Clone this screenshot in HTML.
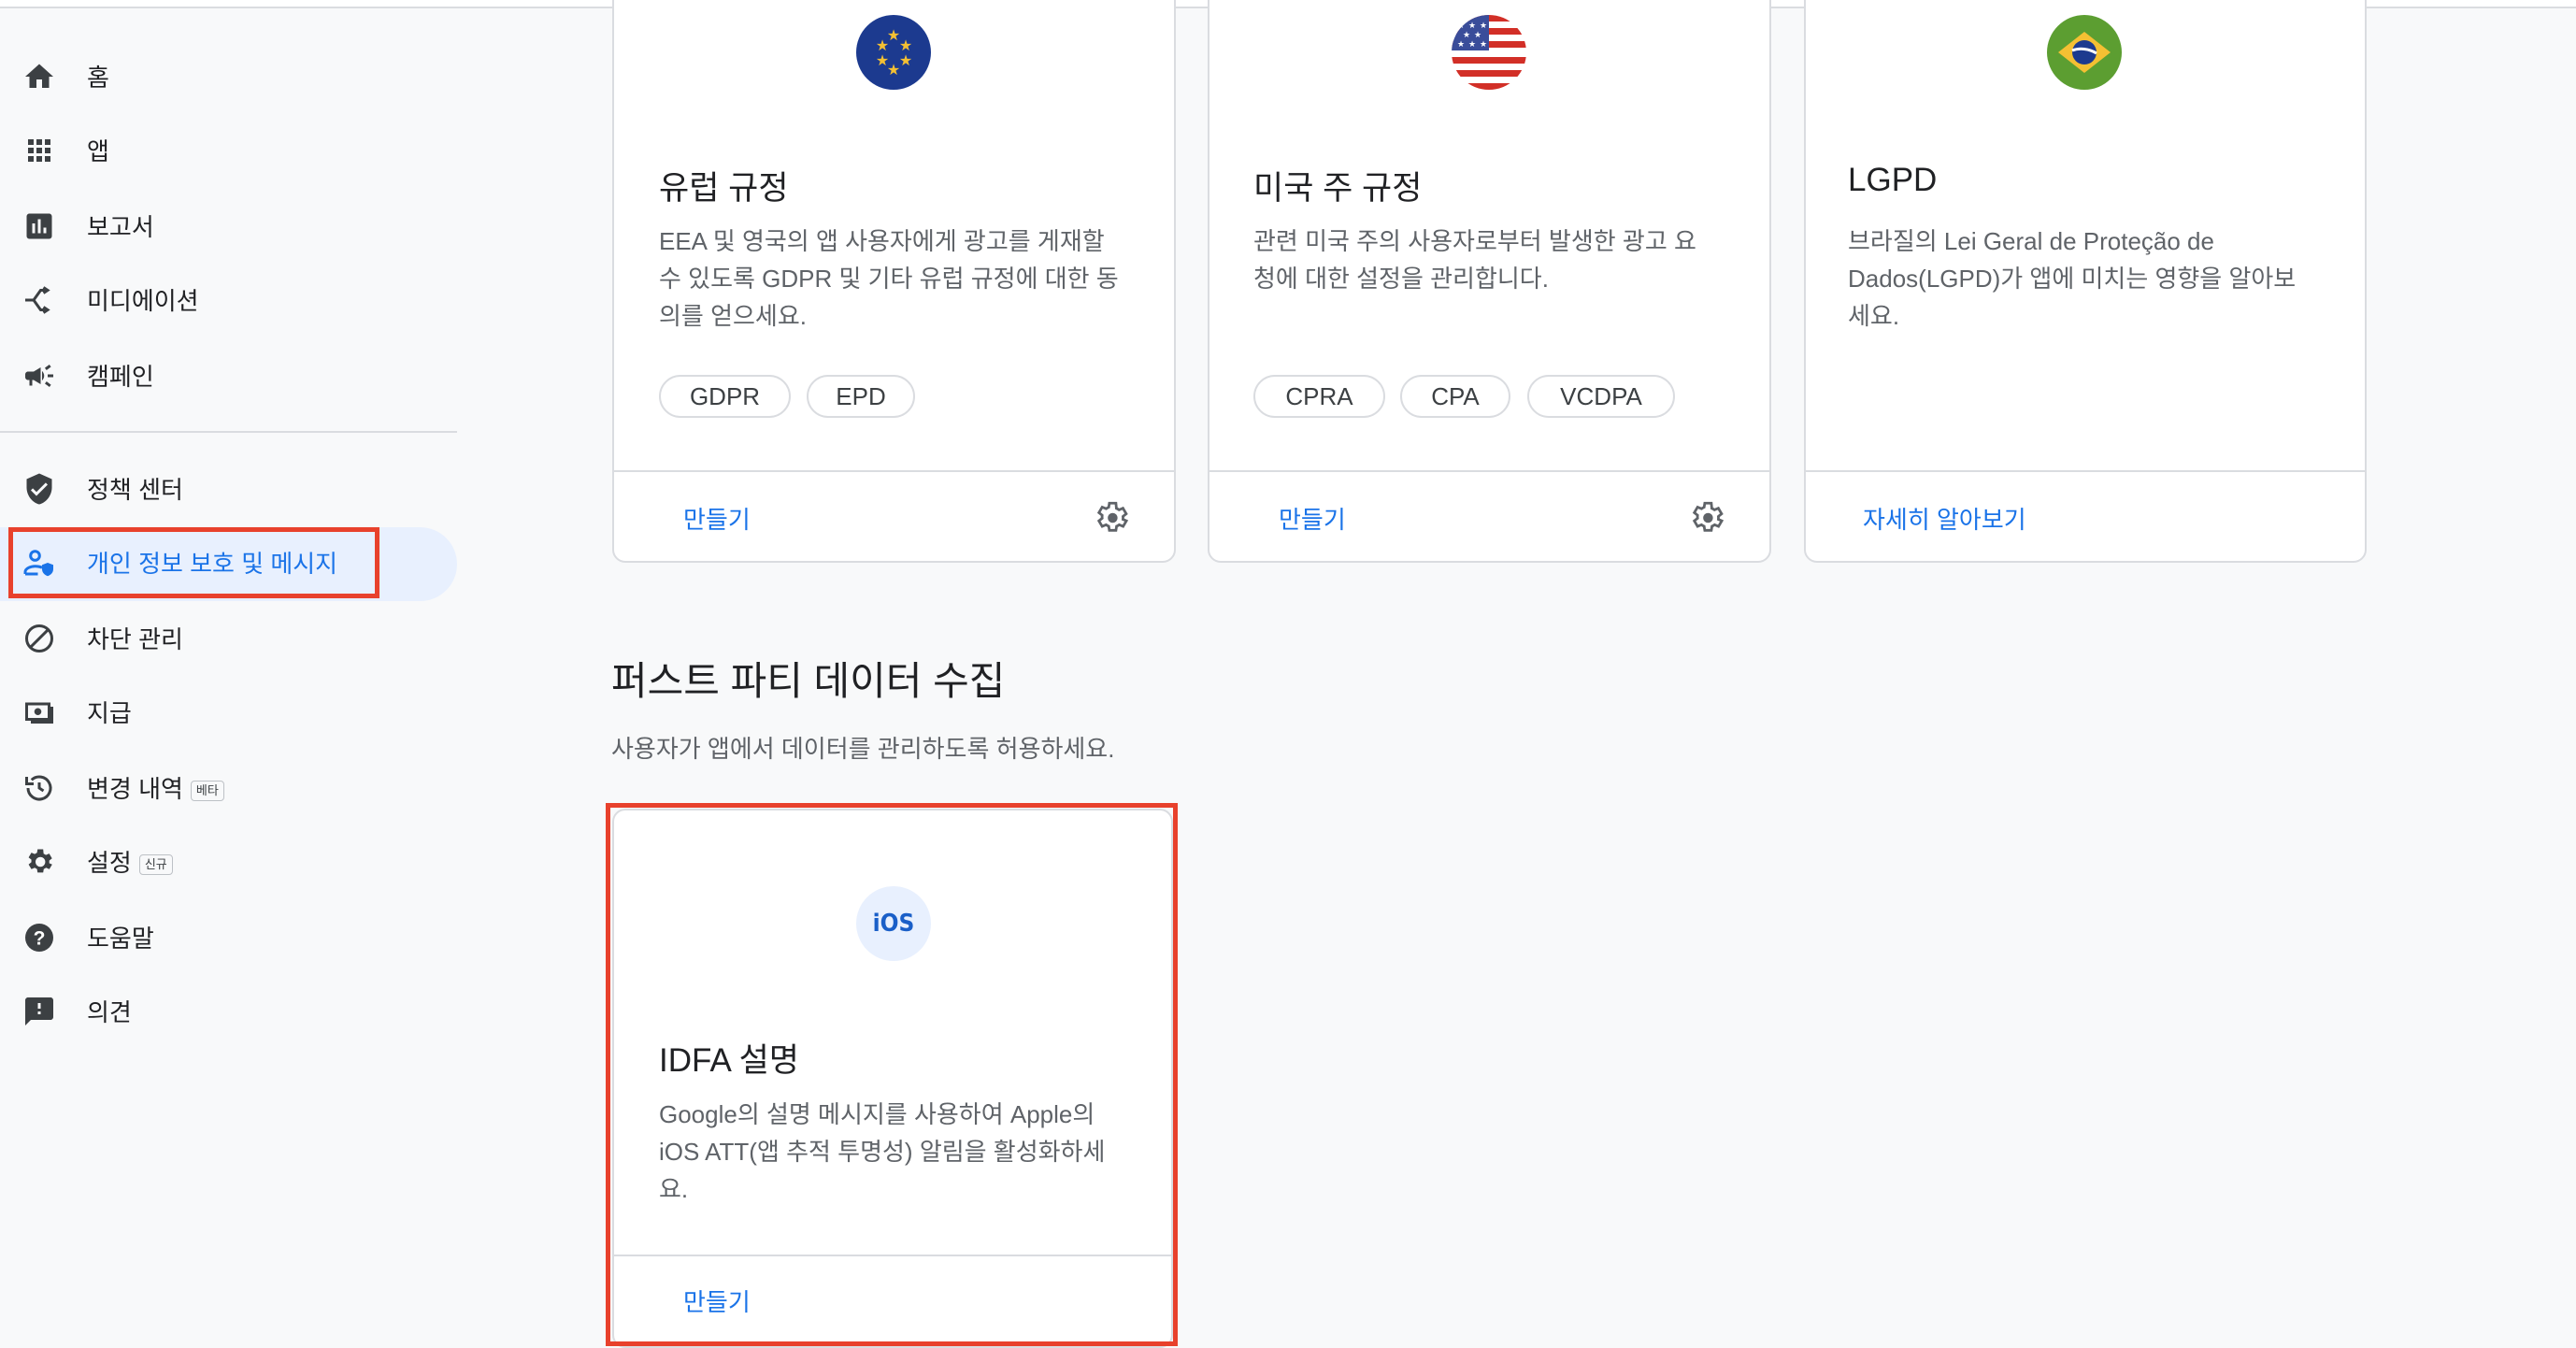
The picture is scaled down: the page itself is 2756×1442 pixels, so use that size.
<!DOCTYPE html>
<html><head><meta charset="utf-8"><style>
*{margin:0;padding:0;box-sizing:border-box}
body{width:2756px;height:1442px;background:#f8f9fa;font-family:"Liberation Sans","Noto Sans CJK KR",sans-serif;position:relative;overflow:hidden;color:#202124}
.a{position:absolute}
.topbar{left:0;top:0;width:2756px;height:9px;background:#fff;border-bottom:2px solid #dadce0}
.nav{left:93px;font-size:26px;color:#202124;line-height:30px;white-space:nowrap;margin-top:2px}
.ic{left:24px;width:36px;height:36px}
.badge{display:inline-block;font-size:13px;border:1.5px solid #bdc1c6;border-radius:4px;padding:2px 5px;vertical-align:middle;margin-left:8px;color:#3c4043;line-height:16px}
.card{background:#fff;border:2px solid #dadce0;border-radius:14px}
.title{font-size:35px;color:#202124;white-space:nowrap}
.desc{font-size:26px;line-height:40px;color:#5f6368}
.chip{height:46px;border:2px solid #dadce0;border-radius:23px;font-size:26px;color:#3c4043;line-height:42px;text-align:center}
.link{font-size:26px;color:#1a73e8}
.hr{height:2px;background:#dadce0}
</style></head><body>
<div class="a topbar"></div>

<!-- sidebar -->
<div class="a" style="left:0;top:564px;width:489px;height:79px;background:#e8f0fe;border-radius:0 40px 40px 0"></div>
<div class="a" style="left:9px;top:564px;width:397px;height:76px;border:5px solid #e8412c"></div>
<div class="a" style="left:0;top:461px;width:489px;height:2px;background:#dadce0"></div>

<svg class="a ic" style="top:64px" viewBox="0 0 24 24"><path d="M10 20v-6h4v6h5v-8h3L12 3 2 12h3v8z" fill="#3c4043"/></svg>
<div class="a nav" style="top:66px">홈</div>
<svg class="a ic" style="top:143px" viewBox="0 0 24 24" fill="#3c4043"><path d="M4 4h4v4H4zm6 0h4v4h-4zm6 0h4v4h-4zM4 10h4v4H4zm6 0h4v4h-4zm6 0h4v4h-4zM4 16h4v4H4zm6 0h4v4h-4zm6 0h4v4h-4z"/></svg>
<div class="a nav" style="top:145px">앱</div>
<svg class="a ic" style="top:224px" viewBox="0 0 24 24"><path d="M19 3H5c-1.1 0-2 .9-2 2v14c0 1.1.9 2 2 2h14c1.1 0 2-.9 2-2V5c0-1.1-.9-2-2-2zM9 17H7v-7h2v7zm4 0h-2V7h2v10zm4 0h-2v-4h2v4z" fill="#3c4043"/></svg>
<div class="a nav" style="top:226px">보고서</div>
<svg class="a ic" style="top:303px" viewBox="0 0 24 24" fill="none" stroke="#3c4043" stroke-width="2"><path d="M2 12h6l5-7h4M8 12l5 7h4M15 3l3 2-3 2M15 17l3 2-3 2"/></svg>
<div class="a nav" style="top:305px">미디에이션</div>
<svg class="a ic" style="top:384px" viewBox="0 0 24 24"><path d="M18 11v2h4v-2h-4zm-2 6.6c1 .7 2.2 1.6 3.2 2.4.4-.5.8-1.1 1.2-1.6-1-.7-2.3-1.7-3.2-2.4-.4.5-.8 1.1-1.200 1.6zM20.4 5.6c-.4-.5-.8-1.1-1.2-1.6-1 .7-2.2 1.6-3.2 2.4.4.5.8 1.1 1.2 1.6 1-.7 2.2-1.6 3.2-2.4zM4 9c-1.1 0-2 .9-2 2v2c0 1.1.9 2 2 2h1v4h2v-4h1l5 3V6L8 9H4zm11.5 3c0-1.3-.6-2.5-1.5-3.4v6.7c.9-.8 1.5-2 1.5-3.3z" fill="#3c4043"/></svg>
<div class="a nav" style="top:386px">캠페인</div>
<svg class="a ic" style="top:505px" viewBox="0 0 24 24"><path d="M12 1L3 5v6c0 5.5 3.8 10.7 9 12 5.2-1.3 9-6.5 9-12V5l-9-4zm-2 16l-4-4 1.4-1.4L10 14.2l6.6-6.6L18 9l-8 8z" fill="#3c4043"/></svg>
<div class="a nav" style="top:507px">정책 센터</div>
<svg class="a ic" style="top:584px" viewBox="0 0 24 24"><circle cx="9" cy="7" r="3.2" fill="none" stroke="#1a73e8" stroke-width="2"/><path d="M2 20v-1.5c0-2.5 4-4 7-4s4 .5 5 1" fill="none" stroke="#1a73e8" stroke-width="2"/><path d="M2 20h9" stroke="#1a73e8" stroke-width="2"/><path d="M18 12l4 1.5v3c0 2.5-1.8 4.3-4 5-2.2-.7-4-2.500-4-5v-3z" fill="#1a73e8"/></svg>
<div class="a nav" style="top:586px;color:#1a73e8">개인 정보 보호 및 메시지</div>
<svg class="a ic" style="top:665px" viewBox="0 0 24 24" fill="none" stroke="#3c4043" stroke-width="2"><circle cx="12" cy="12" r="9"/><path d="M5.6 18.4L18.4 5.6"/></svg>
<div class="a nav" style="top:667px">차단 관리</div>
<svg class="a ic" style="top:744px" viewBox="0 0 24 24"><path d="M3 6h16v11H3z" fill="none" stroke="#3c4043" stroke-width="2"/><path d="M21 8v11H6" fill="none" stroke="#3c4043" stroke-width="2"/><circle cx="11" cy="11.5" r="2.5" fill="#3c4043"/></svg>
<div class="a nav" style="top:746px">지급</div>
<svg class="a ic" style="top:825px" viewBox="0 0 24 24" fill="none" stroke="#3c4043" stroke-width="2"><path d="M4 12a8 8 0 1 0 2.5-5.8"/><path d="M3 4v5h5"/><path d="M12 8v4l3 2"/></svg>
<div class="a nav" style="top:827px">변경 내역<span class="badge">베타</span></div>
<svg class="a ic" style="top:904px" viewBox="0 0 24 24"><path d="M19.1 12.9a7 7 0 0 0 0-1.8l2-1.6-2-3.4-2.4 1a7 7 0 0 0-1.6-.9L14.8 3h-4l-.4 2.5a7 7 0 0 0-1.6.9l-2.4-1-2 3.4 2 1.6a7 7 0 0 0 0 1.8l-2 1.6 2 3.4 2.4-1c.5.4 1 .7 1.6.9l.4 2.5h4l.4-2.5c.6-.2 1.1-.5 1.6-.9l2.4 1 2-3.4zM12.8 15.5a3.5 3.5 0 1 1 0-7 3.5 3.5 0 0 1 0 7z" fill="#3c4043"/></svg>
<div class="a nav" style="top:906px">설정<span class="badge">신규</span></div>
<svg class="a ic" style="top:985px" viewBox="0 0 24 24"><circle cx="12" cy="12" r="10" fill="#3c4043"/><text x="12" y="17" font-size="14" font-weight="bold" fill="#fff" text-anchor="middle" font-family="Liberation Sans">?</text></svg>
<div class="a nav" style="top:987px">도움말</div>
<svg class="a ic" style="top:1064px" viewBox="0 0 24 24"><path d="M20 2H4c-1.1 0-2 .9-2 2v18l4-4h14c1.1 0 2-.9 2-2V4c0-1.1-.9-2-2-2zm-7 12h-2v-2h2v2zm0-4h-2V6h2v4z" fill="#3c4043"/></svg>
<div class="a nav" style="top:1066px">의견</div>

<!-- top cards -->
<div class="a card" style="left:655px;top:-20px;width:603px;height:622px;"></div>
<div class="a card" style="left:1292px;top:-20px;width:603px;height:622px;"></div>
<div class="a card" style="left:1930px;top:-20px;width:602px;height:622px;"></div>
<div class="a hr" style="left:657px;top:503px;width:599px"></div>
<div class="a hr" style="left:1294px;top:503px;width:599px"></div>
<div class="a hr" style="left:1932px;top:503px;width:598px"></div>

<svg class="a" style="left:916px;top:16px" width="80" height="80" viewBox="0 0 80 80"><circle cx="40" cy="40" r="40" fill="#1c3a8f"/>
<g fill="#f4c033" font-size="16" text-anchor="middle" font-family="DejaVu Sans"><text x="40" y="27">★</text><text x="28" y="38">★</text><text x="53" y="38">★</text><text x="28" y="54">★</text><text x="53" y="54">★</text><text x="40" y="64">★</text></g></svg>
<svg class="a" style="left:1553px;top:16px" width="80" height="80" viewBox="0 0 80 80"><defs><clipPath id="c"><circle cx="40" cy="40" r="40"/></clipPath></defs><g clip-path="url(#c)"><rect width="80" height="80" fill="#fff"/><g fill="#d22f27"><rect y="0" width="80" height="7"/><rect y="14" width="80" height="7"/><rect y="28" width="80" height="7"/><rect y="45" width="80" height="7"/><rect y="59" width="80" height="7"/><rect y="73" width="80" height="7"/></g><rect width="40" height="38" fill="#3a4d9a"/><g fill="#fff" font-size="9" font-family="DejaVu Sans"><text x="6" y="14">★</text><text x="18" y="14">★</text><text x="30" y="14">★</text><text x="12" y="24">★</text><text x="24" y="24">★</text><text x="6" y="34">★</text><text x="18" y="34">★</text><text x="30" y="34">★</text></g></g></svg>
<svg class="a" style="left:2190px;top:16px" width="80" height="80" viewBox="0 0 80 80"><circle cx="40" cy="40" r="40" fill="#5c9e31"/><path d="M40 18L68 40 40 62 12 40z" fill="#f4c033"/><circle cx="40" cy="40" r="13" fill="#1c3a8f"/><path d="M27 38c8-3 18-2 26 3" stroke="#fff" stroke-width="3" fill="none"/></svg>

<div class="a title" style="left:705px;top:173px">유럽 규정</div>
<div class="a desc" style="left:705px;top:238px;width:496px">EEA 및 영국의 앱 사용자에게 광고를 게재할 수 있도록 GDPR 및 기타 유럽 규정에 대한 동의를 얻으세요.</div>
<div class="a chip" style="left:705px;top:401px;width:141px">GDPR</div>
<div class="a chip" style="left:863px;top:401px;width:116px">EPD</div>
<div class="a link" style="left:731px;top:536px">만들기</div>
<svg class="a" style="left:1168px;top:533px" width="42" height="42" viewBox="0 0 24 24"><path d="M19.1 12.9a7 7 0 0 0 0-1.8l2-1.6-2-3.4-2.4 1a7 7 0 0 0-1.6-.9L14.8 3h-4l-.4 2.5a7 7 0 0 0-1.6.9l-2.4-1-2 3.4 2 1.6a7 7 0 0 0 0 1.8l-2 1.6 2 3.4 2.4-1c.5.4 1 .7 1.6.9l.4 2.5h4l.4-2.5c.6-.2 1.1-.5 1.6-.9l2.4 1 2-3.4z" fill="none" stroke="#5f6368" stroke-width="1.6"/><circle cx="12.8" cy="12" r="3" fill="#5f6368"/></svg>

<div class="a title" style="left:1341px;top:173px">미국 주 규정</div>
<div class="a desc" style="left:1341px;top:238px;width:496px">관련 미국 주의 사용자로부터 발생한 광고 요청에 대한 설정을 관리합니다.</div>
<div class="a chip" style="left:1341px;top:401px;width:141px">CPRA</div>
<div class="a chip" style="left:1498px;top:401px;width:118px">CPA</div>
<div class="a chip" style="left:1634px;top:401px;width:158px">VCDPA</div>
<div class="a link" style="left:1368px;top:536px">만들기</div>
<svg class="a" style="left:1805px;top:533px" width="42" height="42" viewBox="0 0 24 24"><path d="M19.1 12.9a7 7 0 0 0 0-1.8l2-1.6-2-3.4-2.4 1a7 7 0 0 0-1.6-.9L14.8 3h-4l-.4 2.5a7 7 0 0 0-1.6.9l-2.4-1-2 3.4 2 1.6a7 7 0 0 0 0 1.8l-2 1.6 2 3.4 2.4-1c.5.4 1 .7 1.6.9l.4 2.5h4l.4-2.5c.6-.2 1.1-.5 1.6-.9l2.4 1 2-3.4z" fill="none" stroke="#5f6368" stroke-width="1.6"/><circle cx="12.8" cy="12" r="3" fill="#5f6368"/></svg>

<div class="a title" style="left:1977px;top:173px">LGPD</div>
<div class="a desc" style="left:1977px;top:238px;width:496px">브라질의 Lei Geral de Proteção de Dados(LGPD)가 앱에 미치는 영향을 알아보세요.</div>
<div class="a link" style="left:1993px;top:536px">자세히 알아보기</div>

<!-- section -->
<div class="a" style="left:654px;top:695px;font-size:42px;color:#202124">퍼스트 파티 데이터 수집</div>
<div class="a" style="left:654px;top:781px;font-size:26px;color:#5f6368">사용자가 앱에서 데이터를 관리하도록 허용하세요.</div>

<div class="a card" style="left:655px;top:865px;width:600px;height:577px"></div>
<div class="a" style="left:648px;top:859px;width:612px;height:581px;border:5px solid #e8412c"></div>
<div class="a hr" style="left:657px;top:1342px;width:596px"></div>
<div class="a" style="left:916px;top:948px;width:80px;height:80px;border-radius:50%;background:#e8f0fe;color:#1a5fc8;font-size:26px;font-weight:bold;text-align:center;line-height:80px;font-family:'DejaVu Sans Condensed','Liberation Sans',sans-serif">iOS</div>
<div class="a title" style="left:705px;top:1106px">IDFA 설명</div>
<div class="a desc" style="left:705px;top:1172px;width:496px">Google의 설명 메시지를 사용하여 Apple의 iOS ATT(앱 추적 투명성) 알림을 활성화하세요.</div>
<div class="a link" style="left:731px;top:1373px">만들기</div>
</body></html>
